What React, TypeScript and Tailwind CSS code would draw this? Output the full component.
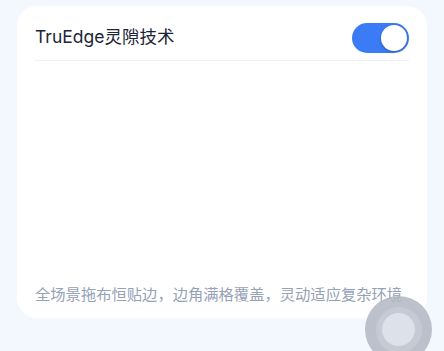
import React, { useState } from 'react';

export default function App() {
  const [on, setOn] = useState(true);

  return (
    <div
      className="relative w-[444px] h-[351px] overflow-hidden bg-[#f3f7fe] pt-[6px] px-[17px]"
      style={{ fontFamily: 'Inter, "Noto Sans CJK SC", sans-serif' }}
    >
      <div className="bg-white rounded-[20px] h-[312px] flex flex-col px-[18px]">
        {/* header row */}
        <div className="flex items-center justify-between h-[55px] pt-[9px] border-b border-[#eef1f5]">
          <span className="text-[17.5px] text-[#1c2536]">TruEdge灵隙技术</span>
          <button
            onClick={() => setOn(!on)}
            className={`w-[57px] h-[30px] rounded-full p-[2px] flex items-center ${on ? 'bg-[#3b7bf6] justify-end' : 'bg-[#e2e6ed] justify-start'}`}
          >
            <span className="w-[26px] h-[26px] rounded-full bg-white shadow-[0_1px_3px_rgba(0,0,0,0.25)]" />
          </button>
        </div>

        <div className="flex-1" />

        <p className="text-[15.3px] text-[#95a1b6] mb-[11px] whitespace-nowrap">
          全场景拖布恒贴边，边角满格覆盖，灵动适应复杂环境
        </p>
      </div>

      {/* floating assistive button */}
      <div className="absolute left-[365px] top-[296px] w-[67px] h-[67px] rounded-full bg-[#b2b6c2]/85 flex items-center justify-center">
        <div className="w-[46px] h-[46px] rounded-full bg-[#c6cad4] flex items-center justify-center">
          <div className="w-[33px] h-[33px] rounded-full bg-[#dce1ea]" />
        </div>
      </div>
    </div>
  );
}
